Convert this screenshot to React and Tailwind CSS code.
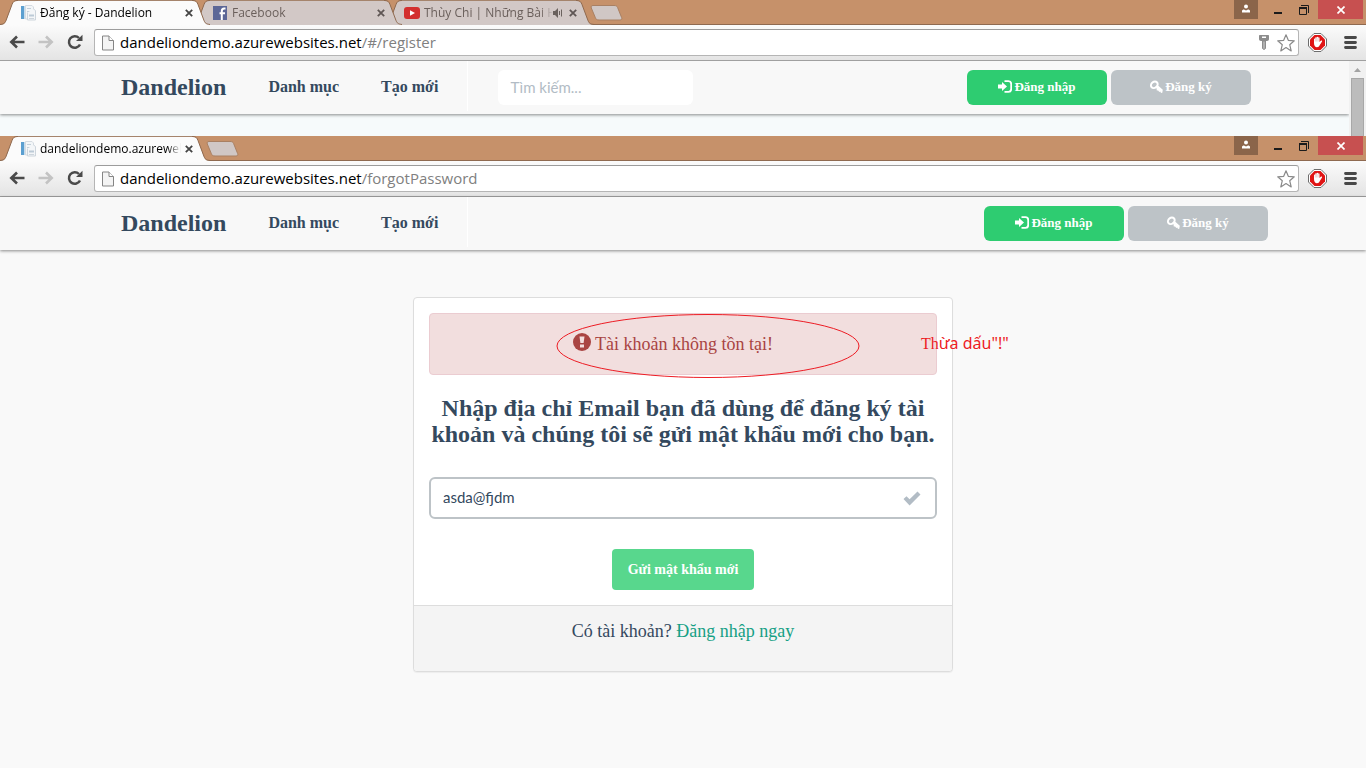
import React from "react";

function PageFavicon() {
  return (
    <svg width="16" height="16" viewBox="0 0 16 16" className="shrink-0" aria-hidden="true">
      <rect x="1" y="1" width="3" height="13" fill="#5b9fd0" />
      <rect x="4" y="1" width="1" height="13" fill="#c5dced" />
      <path d="M5.500.5h6.500l1.500 1.500v12h-8z" fill="#f3f6f8" stroke="#d5dbe1" />
      <path d="M7 3.500h4M7 6.500h3" stroke="#c3cfd9" />
      <path d="M7.500 7.500v7.500h8V5.500L13.500 4" fill="#f4f6f8" stroke="#cdd5dc" />
      <path d="M9 9.500h5v2H9z" fill="#bccad6" />
      <path d="M9 13.500h5" stroke="#cdd5dc" />
    </svg>
  );
}

function FacebookIcon() {
  return (
    <svg width="14" height="14" viewBox="0 0 14 14" className="mx-px shrink-0" aria-hidden="true">
      <rect width="14" height="14" fill="#5c6797" />
      <path d="M12.500 2.500h-1.300c-1.500 0-2.400.9-2.400 2.500v1.500M8.800 14V6M6.500 7.300h5.500" fill="none" stroke="#fff" strokeWidth="2" />
    </svg>
  );
}

function YoutubeIcon() {
  return (
    <svg width="16" height="16" viewBox="0 0 16 16" className="shrink-0" aria-hidden="true">
      <rect x="0" y="2" width="16" height="12" rx="3" fill="#d3302f" />
      <path d="M6 5.300v5.400L11 8z" fill="#fff" />
    </svg>
  );
}

function SpeakerIcon() {
  return (
    <svg width="12" height="12" viewBox="0 0 12 12" className="shrink-0" aria-hidden="true">
      <path d="M0 4h2l3-3v10L2 8H0z" fill="#6b625e" />
      <path d="M6.500 4v4M8.500 2.500v7" stroke="#6b625e" />
    </svg>
  );
}

function TabEdge({ active, right }) {
  return (
    <svg
      width="18"
      height="25"
      viewBox="0 0 18 25"
      className={right ? "shrink-0 -scale-x-100" : "shrink-0"}
      aria-hidden="true"
    >
      <path d="M0 25C4 24.500 5 23.500 6 21L12 4.500C13 2 14 1 17 1H18V25Z" fill={active ? "#fbfbfb" : "#d2c8c6"} />
      <path d="M0 24.500C4 24 5 23 6 20.500L12 4.500C13 2 14 .5 17 .5H18" fill="none" stroke="#8f6a50" />
    </svg>
  );
}

function Tab({ icon, title, active, audio, layer }) {
  return (
    <div className={`relative -mr-[18px] flex h-[25px] w-[210px] ${layer}`}>
      <TabEdge active={active} />
      <div
        className={`flex min-w-0 flex-1 items-center border-t pl-[2px] ${
          active ? "border-[#a5846c] bg-[#fbfbfb] text-black" : "border-[#a5846c] bg-[#d2c8c6] text-[#6a5f5b]"
        }`}
      >
        {icon}
        <span className="ml-1 min-w-0 flex-1 overflow-hidden mask-r-from-90% font-['Open_Sans',sans-serif] text-xs leading-4 whitespace-nowrap">
          {title}
        </span>
        {audio && <SpeakerIcon />}
        <button type="button" aria-label="Đóng thẻ" className="relative z-10 -mr-[5px] grid size-4 shrink-0 place-items-center">
          <svg width="8" height="8" viewBox="0 0 8 8" aria-hidden="true">
            <path d="M.8.8l6.400 6.400M7.200.8L.8 7.200" stroke={active ? "#444" : "#5f5654"} strokeWidth="1.800" />
          </svg>
        </button>
      </div>
      <TabEdge active={active} right />
    </div>
  );
}

function WindowControls() {
  return (
    <div className="ml-auto flex h-[19px] pr-[3px]">
      <button type="button" aria-label="Hồ sơ" className="grid w-6 place-items-center bg-[#8b654a]">
        <svg width="10" height="12" viewBox="0 0 10 12" aria-hidden="true">
          <circle cx="5" cy="2.500" r="2" fill="#fff" />
          <path d="M1 8.500V7c0-1 1-1.500 2-1.500l2 1 2-1c1 0 2 .5 2 1.500v1.500z" fill="#fff" />
        </svg>
      </button>
      <button type="button" aria-label="Thu nhỏ" className="ml-2 grid w-6 place-items-center">
        <svg width="8" height="10" viewBox="0 0 8 10" aria-hidden="true"><path d="M0 7h8v2H0z" fill="#1b1b1b" /></svg>
      </button>
      <button type="button" aria-label="Khôi phục" className="grid w-[28px] place-items-center">
        <svg width="10" height="10" viewBox="0 0 10 10" aria-hidden="true">
          <path d="M2 .5h7.500V8" fill="none" stroke="#1b1b1b" />
          <path d="M.5 3h7v6.500h-7z" fill="none" stroke="#1b1b1b" />
          <path d="M0 2h8v2H0z" fill="#1b1b1b" />
        </svg>
      </button>
      <button type="button" aria-label="Đóng" className="grid w-[45px] place-items-center bg-[#c75050]">
        <svg width="8" height="8" viewBox="0 0 8 8" aria-hidden="true">
          <path d="M.5.5l7 7M7.500.5l-7 7" stroke="#fff" strokeWidth="1.700" />
        </svg>
      </button>
    </div>
  );
}

function Toolbar({ host, path, withKey }) {
  return (
    <div className="flex h-9 items-center border-b border-[#a0a0a0] bg-linear-to-b from-[#fbfbfb] to-[#e4e4e4] pr-2 pb-px pl-[9px]">
      <button type="button" aria-label="Quay lại" className="w-4">
        <svg width="16" height="14" viewBox="0 0 16 14" className="block" aria-hidden="true">
          <path d="M15.500 7H3M8 1.500L2.300 7 8 12.500" fill="none" stroke="#4a4a4a" strokeWidth="2.600" />
        </svg>
      </button>
      <button type="button" aria-label="Tiến" className="ml-[13px] w-4">
        <svg width="16" height="14" viewBox="0 0 16 14" className="block" aria-hidden="true">
          <path d="M.5 7H13M8 1.500L13.700 7 8 12.500" fill="none" stroke="#c3c3c3" strokeWidth="2.600" />
        </svg>
      </button>
      <button type="button" aria-label="Tải lại" className="ml-[13px] w-4">
        <svg width="16" height="16" viewBox="0 0 16 16" className="block" aria-hidden="true">
          <path d="M13 10.500A5.800 5.800 0 1 1 12 4" fill="none" stroke="#4a4a4a" strokeWidth="2.500" />
          <path d="M15.500.8V7H9z" fill="#4a4a4a" />
        </svg>
      </button>
      <div className="mt-px ml-[11px] flex h-[27px] flex-1 items-center rounded-[3px] border border-[#b5b5b5] border-t-[#9c9c9c] bg-white pr-[3px] pl-[7px]">
        <svg width="12" height="16" viewBox="0 0 12 16" className="shrink-0" aria-hidden="true">
          <path d="M.5 1h6.500L11.500 5.500V15H.5z" fill="#f4f4f4" stroke="#858585" />
          <path d="M7 1v4.500h4.500" fill="#fff" stroke="#858585" />
        </svg>
        <p className="ml-[6px] flex-1 pb-[2px] font-['Open_Sans',sans-serif] text-[15px] leading-5 text-black">
          {host}
          <span className="text-[#808080]">{path}</span>
        </p>
        {withKey && (
          <svg width="10" height="16" viewBox="0 0 10 16" className="mr-2" aria-hidden="true">
            <path d="M1 0h8c.6 0 1 .4 1 1v3c0 1-.8 2-2 2H2C.8 6 0 5 0 4V1c0-.6.400-1 1-1z" fill="#8c8c8c" />
            <path d="M3 1.500h4v1.500H3z" fill="#fff" />
            <path d="M3.500 6h3v7.500L5 14.500l-1.500-1z" fill="#b0b0b0" stroke="#8c8c8c" />
          </svg>
        )}
        <button type="button" aria-label="Đánh dấu trang">
          <svg width="18" height="18" viewBox="0 0 18 18" className="block" aria-hidden="true">
            <path
              d="M9 .8L11.300 6.300 17.300 6.800 12.700 10.700 14.200 16.900 9 13.600 3.800 16.900 5.300 10.700.7 6.800 6.700 6.300Z"
              fill="#fff"
              stroke="#8a8a8a"
              strokeWidth="1.200"
              strokeLinejoin="round"
            />
          </svg>
        </button>
      </div>
      <button type="button" aria-label="AdBlock" className="ml-[9px]">
        <svg width="19" height="19" viewBox="0 0 19 19" className="block" aria-hidden="true">
          <path d="M6 .5h7L18.500 6v7L13 18.500H6L.5 13V6z" fill="#fff" stroke="#6d6d6d" />
          <path d="M6.500 2h6L17 6.500v6L12.500 17h-6L2 12.500v-6z" fill="#e01414" />
          <path
            d="M6 10V6.200c0-1 1.200-1 1.200 0V5c0-1 1.400-1 1.400 0V4.400c0-1 1.500-1 1.500 0V5c0-1 1.400-1 1.400 0v4l1.300-1.200c.8-.6 1.600.2 1.100.9L11.800 12c-.7 1.500-1.500 2.200-2.800 2.200C7 14.200 6 12.500 6 10z"
            fill="#fff"
          />
          <path d="M7.300 5.500v3M8.700 5v3.500M10.100 5v3.500" stroke="#d9a0a0" strokeWidth=".5" />
        </svg>
      </button>
      <button type="button" aria-label="Trình đơn" className="ml-[17px]">
        <svg width="14" height="14" viewBox="0 0 14 14" className="block" aria-hidden="true">
          <path d="M1.500 2.500h10M1.500 7.500h10M1.500 12.500h10" stroke="#484848" strokeWidth="2.800" strokeLinecap="round" />
        </svg>
      </button>
    </div>
  );
}

function BrowserChrome({ tabs, host, path, withKey }) {
  return (
    <header>
      <div className="flex h-[25px] bg-[#c6916a] shadow-[inset_0_-1px_0_#8f6a50]">
        <div className="flex">
          {tabs.map((tab) => (
            <Tab key={tab.title} {...tab} />
          ))}
        </div>
        <button type="button" aria-label="Thẻ mới" className="ml-[14px] self-center">
          <svg width="33" height="16" viewBox="0 0 33 16" className="block" aria-hidden="true">
            <path
              d="M3 .5h21c2 0 3 .5 3.600 2l4 10c.6 1.600 0 2.500-1.600 2.500H9c-2 0-3-.6-3.600-2.200L1.300 3C.8 1.500 1.300.5 3 .5z"
              fill="#d0c7c5"
              stroke="#a98063"
            />
          </svg>
        </button>
        <WindowControls />
      </div>
      <Toolbar host={host} path={path} withKey={withKey} />
    </header>
  );
}

function LoginIcon() {
  return (
    <svg width="14" height="14" viewBox="0 0 14 14" aria-hidden="true">
      <path d="M0 4.500h4V2l5 4.500L4 11V8.500H0z" fill="currentColor" />
      <path d="M6.500 1.200h4c1.700 0 2.700 1 2.700 2.700v5.200c0 1.700-1 2.700-2.700 2.700h-4" fill="none" stroke="currentColor" strokeWidth="1.800" />
    </svg>
  );
}

function KeyIcon() {
  return (
    <svg width="13" height="14" viewBox="0 0 13 14" aria-hidden="true">
      <ellipse cx="4.300" cy="4.800" rx="3.600" ry="2.900" transform="rotate(-40 4.300 4.800)" fill="none" stroke="currentColor" strokeWidth="2" />
      <path d="M6 6.500l1.500-1.500 5.300 4.800-.5 3-1.300.2-.7-1.500-1 .6-1.200-1.600-1.300.1-.2-1.700z" fill="currentColor" />
    </svg>
  );
}

function SiteNav({ withSearch }) {
  const action =
    "flex h-[35px] w-[140px] items-center justify-center gap-[2px] rounded-md pb-[2px] text-[13px] font-bold text-white";
  return (
    <nav className="relative flex h-[53px] items-center bg-[#f8f8f8] pr-[98px] pl-[121px] font-['Liberation_Serif',serif] font-bold text-[#34495e] shadow-[0_1px_3px_rgba(0,0,0,0.45)]">
      <div className="flex items-center gap-[42px] pb-[2px]">
        <a href="#home" className="text-2xl leading-6">Dandelion</a>
        <a href="#categories" className="text-base">Danh mục</a>
        <a href="#create" className="text-base">Tạo mới</a>
      </div>
      <div className="ml-[29px] h-[50px] w-px self-start bg-white" />
      {withSearch && (
        <input
          type="text"
          aria-label="Tìm kiếm"
          placeholder="Tìm kiếm..."
          className="ml-[30px] h-[35px] w-[195px] rounded-md bg-white px-3 pb-[2px] font-['Lato',sans-serif] text-[15px] font-normal placeholder:text-[#b2bcc5]"
        />
      )}
      <div className="ml-auto flex gap-1">
        <button type="button" className={`${action} bg-[#2ecc71]`}>
          <LoginIcon />
          Đăng nhập
        </button>
        <button type="button" className={`${action} bg-[#bdc3c7]`}>
          <KeyIcon />
          Đăng ký
        </button>
      </div>
    </nav>
  );
}

function ScrollBar() {
  return (
    <div className="flex w-[17px] flex-col items-center bg-[#f1f1f1]" aria-hidden="true">
      <svg width="9" height="17" viewBox="0 0 9 17"><path d="M1 11l3.500-4L8 11z" fill="#a3a3a3" /></svg>
      <div className="w-[13px] flex-1 border border-b-0 border-[#a8a8a8] bg-[#bcbcbc]" />
    </div>
  );
}

function ForgotPasswordCard() {
  return (
    <section className="relative mx-auto mt-[47px] max-w-[540px] rounded-[4px] border border-[#dddddd] bg-white text-center font-['Liberation_Serif',serif] text-[#34495e] shadow-[0_1px_1px_rgba(0,0,0,0.05)]">
      <form className="p-[15px]" onSubmit={(e) => e.preventDefault()}>
        <div role="alert" className="flex h-[62px] items-center justify-center gap-1 rounded-[4px] border border-[#ebccd1] bg-[#f2dede] pr-5 text-lg text-[#a94442]">
          <svg width="18" height="18" viewBox="0 0 18 18" className="mb-1" aria-hidden="true">
            <circle cx="9" cy="9" r="9" fill="#a94442" />
            <path d="M6.500 3.500h5l-.9 6.500H7.400zM7 11.500h4v3H7z" fill="#f2dede" />
          </svg>
          Tài khoản không tồn tại!
        </div>
        <h1 className="mt-5 text-2xl leading-[26px] font-bold">
          Nhập địa chỉ Email bạn đã dùng để đăng ký tài khoản và chúng tôi sẽ gửi mật khẩu mới cho bạn.
        </h1>
        <div className="mt-[30px] flex h-[42px] items-center rounded-md border-2 border-[#bdc3c7] pr-[14px] pl-3">
          <input
            type="text"
            aria-label="Email"
            defaultValue="asda@fjdm"
            className="min-w-0 flex-1 bg-transparent pb-[2px] font-['Lato',sans-serif] text-[15px] outline-none"
          />
          <svg width="18" height="15" viewBox="0 0 18 15" aria-hidden="true">
            <path d="M.5 8L3.500 5.200 6.600 8.200 14.500.5 17.500 3.500 6.600 14.500z" fill="#b2bcc5" />
          </svg>
        </div>
        <button type="submit" className="mt-[30px] h-[41px] rounded-[4px] bg-[#58d78d] px-4 text-sm font-bold text-white">
          Gửi mật khẩu mới
        </button>
      </form>
      <footer className="h-[66px] rounded-b-[4px] border-t border-[#dddddd] bg-[#f4f4f4] pt-[11px] text-lg">
        Có tài khoản? <a href="#login" className="text-[#16a085]">Đăng nhập ngay</a>
      </footer>
      <svg width="304" height="64" viewBox="0 0 304 64" className="pointer-events-none absolute top-4 left-[142px]" aria-hidden="true">
        <ellipse cx="152" cy="32" rx="151" ry="31.500" fill="none" stroke="#ed1c24" />
      </svg>
      <p className="absolute top-[35px] left-[507px] text-base leading-5 whitespace-nowrap text-[#ed1c24]">
        Th<span className="font-['Noto_Sans','Open_Sans',sans-serif]">ừa dấu"!"</span>
      </p>
    </section>
  );
}

const registerTabs = [
  { icon: <PageFavicon />, title: "Đăng ký - Dandelion", active: true, layer: "z-30" },
  { icon: <FacebookIcon />, title: "Facebook", layer: "z-20" },
  { icon: <YoutubeIcon />, title: "Thùy Chi | Những Bài H", audio: true, layer: "z-10" },
];

const forgotTabs = [
  { icon: <PageFavicon />, title: "dandeliondemo.azureweb", active: true, layer: "z-30" },
];

export default function App() {
  return (
    <div className="flex min-h-screen flex-col bg-[#f9f9f9]">
      <section>
        <BrowserChrome tabs={registerTabs} host="dandeliondemo.azurewebsites.net" path="/#/register" withKey />
        <div className="flex h-[75px] bg-[#f6fafb]">
          <div className="flex-1 overflow-hidden">
            <SiteNav withSearch />
          </div>
          <ScrollBar />
        </div>
      </section>
      <section className="flex-1">
        <BrowserChrome tabs={forgotTabs} host="dandeliondemo.azurewebsites.net" path="/forgotPassword" />
        <SiteNav />
        <ForgotPasswordCard />
      </section>
    </div>
  );
}
